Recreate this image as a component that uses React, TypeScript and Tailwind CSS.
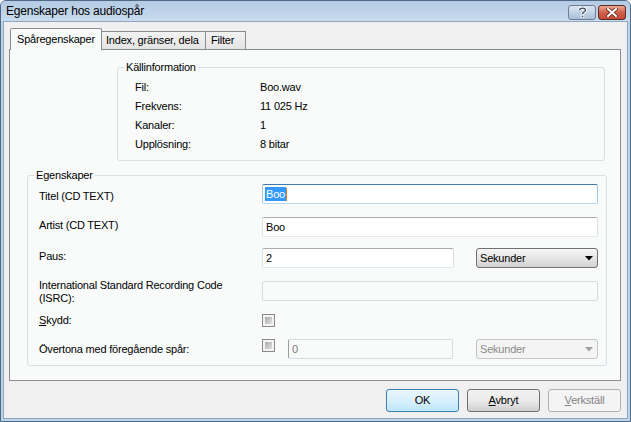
import React from 'react';

// Vista-style "Egenskaper hos audiospår" dialog

const ui = "font-['Liberation_Sans',Arial,sans-serif] text-[11px] tracking-[-0.2px] leading-[13px] text-black";

function Arrow({ disabled }: { disabled?: boolean }) {
  return (
    <svg width="8" height="5" viewBox="0 0 8 5">
      <path d="M0 0 H8 L4 4.5 Z" fill={disabled ? '#a0a0a0' : '#000'} />
    </svg>
  );
}

function Combo({ disabled, className }: { disabled?: boolean; className: string }) {
  return (
    <div
      className={`${className} h-[20px] flex items-center justify-between pl-[3px] pr-[4px] rounded-[3px] border ${
        disabled
          ? 'border-[#c2c6c9] bg-[#f4f4f4] text-[#8a8a8a]'
          : 'border-[#707070] bg-gradient-to-b from-[#f6f6f6] via-[#e6e6e6] to-[#d2d2d2] text-black'
      }`}
    >
      <span>Sekunder</span>
      <Arrow disabled={disabled} />
    </div>
  );
}

function Box({ className, children, focused, disabled }: { className: string; children?: React.ReactNode; focused?: boolean; disabled?: boolean }) {
  let border = 'border-[#abadb3] border-l-[#dbdfe6] border-r-[#dbdfe6] border-b-[#e3e9ef] bg-white';
  if (focused) border = 'border-[#3d7bad] border-l-[#a4c9e3] border-r-[#a4c9e3] border-b-[#b7d9ed] bg-white';
  if (disabled) border = 'border-[#d6dbe0] bg-transparent text-[#7a7a7a]';
  return (
    <div className={`${className} flex items-center pl-[2px] border rounded-[2px] ${border}`}>{children}</div>
  );
}

function Check() {
  return (
    <div className="w-[13px] h-[13px] border border-[#8a8a8a] bg-[#f4f4f4] p-[2px] shrink-0">
      <div className="w-full h-full bg-gradient-to-br from-[#a8a8a8] to-[#e2e2e2]" />
    </div>
  );
}

function Btn({ children, kind }: { children: React.ReactNode; kind: 'default' | 'normal' | 'disabled' }) {
  const style =
    kind === 'default'
      ? 'border-[#3c7fb1] bg-gradient-to-b from-[#eaf6fd] via-[#d9f0fc] to-[#bee6fd] text-black'
      : kind === 'normal'
      ? 'border-[#707070] bg-gradient-to-b from-[#f2f2f2] via-[#ebebeb] to-[#cfcfcf] text-black'
      : 'border-[#adb2b5] bg-[#f4f4f4] text-[#838383]';
  return (
    <div className={`w-[73px] h-[23px] flex items-center justify-center rounded-[3px] border ${style}`}>{children}</div>
  );
}

export default function App() {
  return (
    <div className={`${ui} w-[631px] h-[422px] flex flex-col bg-[#bcd3ea] border border-[#4e6a86] rounded-t-[6px] overflow-hidden`}>
      {/* title bar */}
      <div className="h-[20px] shrink-0 flex items-center justify-between pl-[5px] pr-[4px] bg-gradient-to-b from-[#b3cbe4] to-[#c9dbee]">
        <span className="text-[12px] tracking-[-0.2px] pt-[1px]">Egenskaper hos audiospår</span>
        <div className="flex gap-[2px] pt-[3px]">
          <div className="w-[28px] h-[15px] rounded-[3px] border border-[#6c7e92] bg-gradient-to-b from-[#dbe6f1] via-[#c2d3e5] to-[#a9bed5] flex items-center justify-center">
            <svg width="9" height="11" viewBox="0 0 9 11">
              <path d="M1.5 3.2 C1.5 0.6 7.5 0.6 7.5 3.2 C7.5 5 4.5 5 4.5 7" fill="none" stroke="#fff" strokeWidth="3.2" />
              <path d="M1.5 3.2 C1.5 0.6 7.5 0.6 7.5 3.2 C7.5 5 4.5 5 4.5 7" fill="none" stroke="#4a5868" strokeWidth="1.5" />
              <rect x="3.2" y="8.2" width="2.6" height="2.6" fill="#4a5868" stroke="#fff" strokeWidth="0.8" />
            </svg>
          </div>
          <div className="w-[28px] h-[15px] rounded-[3px] border border-[#5e2a22] bg-gradient-to-b from-[#e8a99b] via-[#cf5f49] to-[#c24a34] flex items-center justify-center">
            <svg width="12" height="9" viewBox="0 0 12 9">
              <path d="M2 1 L10 8 M10 1 L2 8" stroke="#6a2a1f" strokeWidth="3.6" strokeLinecap="square" />
              <path d="M2 1 L10 8 M10 1 L2 8" stroke="#fff" strokeWidth="2" strokeLinecap="square" />
            </svg>
          </div>
        </div>
      </div>

      {/* client area */}
      <div className="flex-1 mx-[2px] mb-[2px] border border-[#8ea6bf] bg-[#f0f0f0] flex flex-col pt-[6px]">
        {/* tabs */}
        <div className="h-[21px] flex items-end pl-[6px]">
          <div className="relative z-10 -mb-px w-[92px] h-[22px] border border-b-0 border-[#898c95] bg-[#f8fbfa] pl-[6px] pt-[4px] rounded-t-[2px]">
            Spåregenskaper
          </div>
          <div className="w-[104px] h-[18px] border border-b-0 border-l-0 border-[#898c95] bg-gradient-to-b from-[#f2f2f2] to-[#e4e4e4] pl-[4px] pt-[2px]">
            Index, gränser, dela
          </div>
          <div className="w-[40px] h-[18px] border border-b-0 border-l-0 border-[#898c95] bg-gradient-to-b from-[#f2f2f2] to-[#e4e4e4] pl-[5px] pt-[2px]">
            Filter
          </div>
        </div>

        {/* panel */}
        <div className="h-[332px] ml-[5px] mr-[6px] border border-[#898c95] bg-[#f8fbfa] flex flex-col">
          <fieldset className="mt-[11px] ml-[107px] mr-[15px] border border-[#d5dfe5] rounded-[3px] pl-[6px] pb-[6px]">
            <legend className="px-[2px]">Källinformation</legend>
            <div className="pt-[4px] pl-[11px]">
              {[
                ['Fil:', 'Boo.wav'],
                ['Frekvens:', '11 025 Hz'],
                ['Kanaler:', '1'],
                ['Upplösning:', '8 bitar'],
              ].map(([k, v]) => (
                <div key={k} className="h-[19px] flex items-center">
                  <span className="w-[125px]">{k}</span>
                  <span>{v}</span>
                </div>
              ))}
            </div>
          </fieldset>

          <fieldset className="mt-[8px] ml-[17px] mr-[13px] border border-[#d5dfe5] rounded-[3px] pl-[6px] pr-[8px] pb-[6px]">
            <legend className="px-[2px]">Egenskaper</legend>
            <div className="pt-[2px] pl-[5px] flex flex-col">
              <div className="h-[20px] flex items-center">
                <span className="w-[223px] pt-[5px]">Titel (CD TEXT)</span>
                <Box className="w-[336px] h-[20px]" focused>
                  <span className="bg-[#3399ff] text-white leading-[14px] px-[1px]">Boo</span>
                  <span className="w-px h-[13px] bg-[#d0802a]" />
                </Box>
              </div>
              <div className="mt-[13px] h-[20px] flex items-center">
                <span className="w-[223px] pb-[3px]">Artist (CD TEXT)</span>
                <Box className="w-[336px] h-[20px]">
                  <span className="pl-px">Boo</span>
                </Box>
              </div>
              <div className="mt-[11px] h-[20px] flex items-center">
                <span className="w-[223px] pb-[3px]">Paus:</span>
                <Box className="w-[192px] h-[20px]">
                  <span className="pl-px">2</span>
                </Box>
                <Combo className="ml-[22px] w-[122px]" />
              </div>
              <div className="mt-[11px] h-[27px] flex items-start">
                <span className="w-[223px]">
                  International Standard Recording Code
                  <br />
                  (ISRC):
                </span>
                <Box className="mt-[2px] w-[336px] h-[20px]" disabled />
              </div>
              <div className="mt-[6px] h-[16px] flex items-center">
                <span className="w-[223px] pt-[1px]">
                  <span className="underline">S</span>kydd:
                </span>
                <Check />
              </div>
              <div className="mt-[11px] h-[20px] flex items-center">
                <span className="w-[223px] pt-[1px]">Övertona med föregående spår:</span>
                <div className="w-[336px] flex items-center">
                  <div className="self-start">
                    <Check />
                  </div>
                  <Box className="ml-[13px] w-[165px] h-[20px] border-l-[#9a9a9a]" disabled>
                    <span className="pl-px">0</span>
                  </Box>
                  <Combo className="ml-[23px] w-[122px]" disabled />
                </div>
              </div>
            </div>
          </fieldset>
        </div>

        {/* buttons */}
        <div className="mt-[8px] flex justify-end gap-[8px] pr-[6px]">
          <Btn kind="default">OK</Btn>
          <Btn kind="normal">
            <span>
              <span className="underline">A</span>vbryt
            </span>
          </Btn>
          <Btn kind="disabled">
            <span>
              <span className="underline">V</span>erkställ
            </span>
          </Btn>
        </div>
      </div>
    </div>
  );
}
